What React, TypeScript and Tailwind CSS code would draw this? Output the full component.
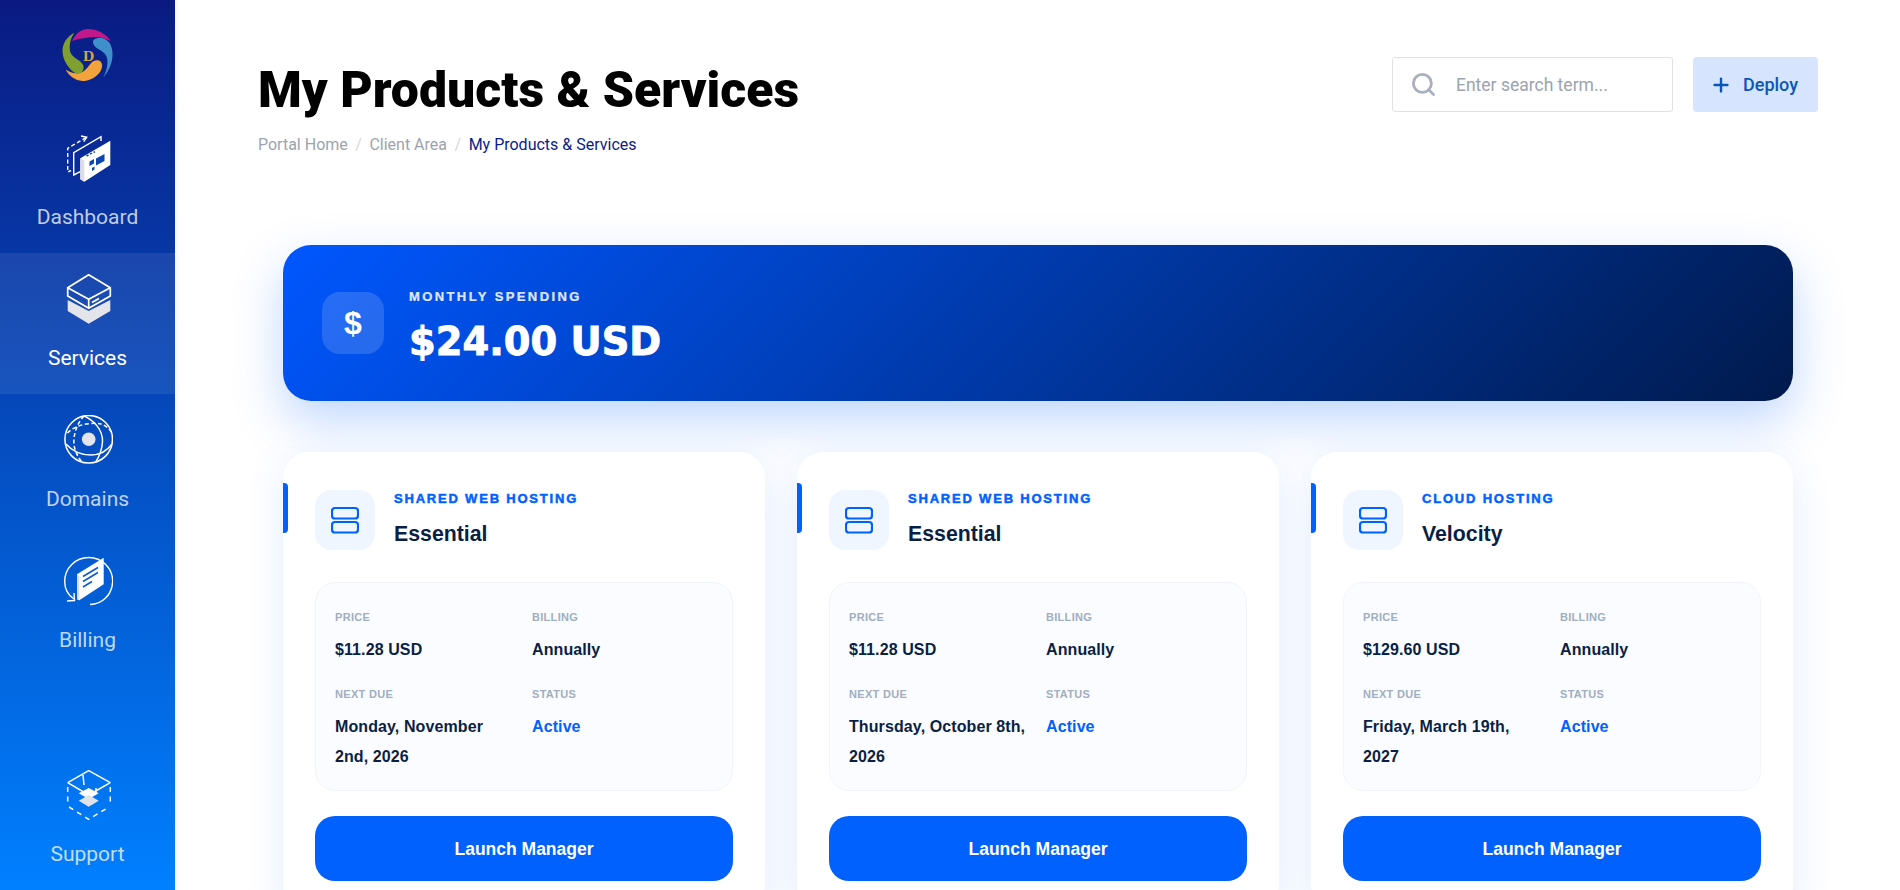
import { Search, Plus } from "lucide-react";

const roboto = "font-['Roboto',sans-serif]";
const arial = "font-['Liberation_Sans',Arial,sans-serif]";

function Logo() {
  return (
    <svg width="52" height="52" viewBox="0 0 50 50">
      <path d="M9.700 11.700C13 4 19 0 25 0C33 0 42 4 47 11.700C41 8.500 34 7 27 8C20 9 14 9.500 9.700 11.700Z" fill="#c2188b" />
      <path d="M30 11C34 7 41 8 45.500 13C50.500 20 50 35 39.700 46.700C44 38 45 30 42 25C39 20 33 19 31 16C30 14 29.500 12.500 30 11Z" fill="#3f8fca" />
      <path d="M3.500 39C9 43 15 43.500 20 41C25 38.500 27 32 31 30.500C35 29 39 31 38.500 36C38 42 31 48.500 22 50C14 50.500 7 46 3.500 39Z" fill="#f3a33c" />
      <path d="M12 3.500C5 7 0 14 0.500 22C1 30 6 38 13 42.500C18 44 22 40 20.500 35C19 30 10 28 8 22C6.500 16 8 9 12 3.500Z" fill="#7f9f2f" />
      <text x="25.500" y="30.500" textAnchor="middle" fontSize="15" fontWeight="700" fontFamily="'Liberation Serif',serif" fill="#d9a63c">D</text>
    </svg>
  );
}

function DashboardIcon() {
  return (
    <svg width="50" height="50" viewBox="0 0 50 50" fill="none" stroke="#fff" strokeWidth="1.400">
      <path d="M23 4.500L4.700 15.300V39L8 37.500" strokeDasharray="4 2.500" />
      <path d="M18 3L23.700 4.300L20.700 8.700" />
      <path d="M38 8V3.700L10.700 19.700V42L17.300 38.700" />
      <path d="M17.300 25.300L47.300 7.700V32L21.300 48.700L17.300 46.300Z" fill="#fff" stroke="none" />
      <path d="M17.300 25.300L21.300 27.700V48.700L17.300 46.300Z" fill="#dcdde3" stroke="none" />
      <path d="M23.500 23L25.500 22M27 21.200L29 20.200M30.500 19.400L32 18.700" stroke="#0b47b0" strokeWidth="1.500" />
      <path d="M26.500 28.500L31 26V30.500L26.500 33ZM33 25.500L41.500 21V28L33 32.500ZM29 35L31.500 33.500V36.500L29 38Z" fill="#0b47b0" stroke="none" />
    </svg>
  );
}

function ServicesIcon() {
  return (
    <svg width="50" height="50" viewBox="0 0 50 50" fill="none" stroke="#fff" strokeWidth="1.700" strokeLinejoin="round">
      <path d="M4.700 26L25.700 37L47.300 26V37L25.700 49.700L4.700 37Z" fill="#e4e5ea" stroke="none" />
      <path d="M4.700 13.700L25.700 0.800L47.300 13.700L25.700 25.300ZM4.700 13.700V22L25.700 34.300L47.300 22V13.700M25.700 25.300V34.300" />
      <path d="M29 28.500L36 24.500" strokeWidth="1.700" />
    </svg>
  );
}

function DomainsIcon() {
  return (
    <svg width="50" height="50" viewBox="0 0 50 50" fill="none" stroke="#fff" strokeWidth="1.500">
      <circle cx="25.700" cy="24.300" r="23.800" />
      <path d="M21 1C30 5 40 14 39.500 27C39 34 36 42 32.500 47.500" />
      <path d="M3 29C10 37 20 40 28 40C36 40 44 36 49 29" />
      <path d="M4.500 18C13 9 30 7 38 9C42 10 46 13 49 18" strokeDasharray="4 2.500" />
      <path d="M21 1C14 8 10 20 11 30C12 36 15 43 20 48" strokeDasharray="4 2.500" />
      <circle cx="25.700" cy="24.300" r="6.800" fill="#e4e5ea" stroke="none" />
    </svg>
  );
}

function BillingIcon() {
  return (
    <svg width="50" height="50" viewBox="0 0 50 50" fill="none" stroke="#fff" strokeWidth="1.400">
      <path d="M11 43C5 39 1.700 32 1.700 25.500C1.700 12 12.500 1.500 25.700 1.500C39 1.500 49.700 12 49.700 25.500C49 39 39 48.500 27 48.500" />
      <path d="M4 45L11.500 44.500L11 37" />
      <path d="M14 18.300L40.700 1.700V28.300L16.300 44.300L14 43.300Z" fill="#fff" stroke="none" />
      <path d="M14 18.300L16.300 20V44.300L14 43.300Z" fill="#dcdde3" stroke="none" />
      <path d="M20 20.500L35 11.500M20 25.500L35 16.500M20 31L29 25.500" stroke="#0b5ad0" strokeWidth="1.600" />
    </svg>
  );
}

function SupportIcon() {
  return (
    <svg width="50" height="50" viewBox="0 0 50 50" fill="none" stroke="#fff" strokeWidth="1.500" strokeLinejoin="round">
      <path d="M4.700 12.700L25.700 0.700L47.300 12.700" />
      <path d="M4.700 12.700L25.700 25L47.300 12.700M20 5L21 15M33 18V23" />
      <path d="M4.700 17V35M47.300 17V35M6 37L25.700 49.300L46 37" strokeDasharray="5 4.500" />
      <path d="M15.700 23.300L25.700 18L35.700 23.300L25.700 29Z" fill="#fff" stroke="none" />
      <path d="M15.700 30.700L25.700 25L35.700 30.700L25.700 36.700Z" fill="#e1e2e8" stroke="none" />
    </svg>
  );
}

function NavItem({ label, icon, active }: { label: string; icon: React.ReactNode; active?: boolean }) {
  return (
    <a className={`flex h-[141px] flex-col items-center pt-[21px] ${active ? "bg-white/8 text-white" : "text-white/75"}`}>
      <div className="h-[50px] w-[50px]">{icon}</div>
      <span className={`mt-[22px] text-[21px] leading-6 ${roboto}`}>{label}</span>
    </a>
  );
}

type Service = { group: string; name: string; price: string; due: string };

const services: Service[] = [
  { group: "SHARED WEB HOSTING", name: "Essential", price: "$11.28 USD", due: "Monday, November 2nd, 2026" },
  { group: "SHARED WEB HOSTING", name: "Essential", price: "$11.28 USD", due: "Thursday, October 8th, 2026" },
  { group: "CLOUD HOSTING", name: "Velocity", price: "$129.60 USD", due: "Friday, March 19th, 2027" },
];

function Field({ label, children }: { label: string; children: React.ReactNode }) {
  return (
    <div>
      <div className="mb-[6px] text-[11px] leading-6 font-bold tracking-[0.300px] text-[#a0aec0]">{label}</div>
      <div className="text-[16px] leading-[30px] font-bold tracking-[0.100px] text-[#0a1f44]">{children}</div>
    </div>
  );
}

function ServiceCard({ s }: { s: Service }) {
  return (
    <div className={`relative rounded-[26px] bg-white px-[32px] pt-[38px] pb-[30px] shadow-[0_10px_40px_rgba(0,97,255,0.12)] ${arial}`}>
      <div className="absolute top-[31px] left-0 h-[50px] w-[5px] rounded-r-[4px] bg-[#0061ff]" />
      <div className="flex items-center gap-[19px]">
        <div className="flex h-[60px] w-[60px] items-center justify-center rounded-[16px] bg-[#f0f6ff]">
          <svg width="28" height="28" viewBox="0 0 28 28" fill="none" stroke="#0061ff" strokeWidth="2.200">
            <rect x="1" y="2" width="26" height="10.500" rx="3" />
            <rect x="1" y="16" width="26" height="10.500" rx="3" />
          </svg>
        </div>
        <div className="-mt-[1px]">
          <div className="text-[13px] leading-5 font-bold tracking-[1.800px] text-[#0061ff] [-webkit-text-stroke:0.5px_#0061ff]">{s.group}</div>
          <div className="mt-[9px] text-[21.300px] leading-8 font-bold text-[#0a1f44]">{s.name}</div>
        </div>
      </div>
      <div className="mt-[32px] grid h-[209px] grid-cols-2 content-start gap-x-[16px] gap-y-[17px] rounded-[20px] border border-[#f1f4f9] bg-[#fbfcff] px-[19px] pt-[22px]">
        <Field label="PRICE">{s.price}</Field>
        <Field label="BILLING">Annually</Field>
        <Field label="NEXT DUE">{s.due}</Field>
        <Field label="STATUS"><span className="text-[#0061ff]">Active</span></Field>
      </div>
      <button className="mt-[25px] h-[65px] w-full rounded-[20px] bg-[#0061ff] pt-[1px] text-[17.500px] font-bold text-white">
        Launch Manager
      </button>
    </div>
  );
}

export default function App() {
  return (
    <div className="flex h-screen overflow-hidden bg-white">
      <aside className="flex h-full w-[175px] shrink-0 flex-col bg-[linear-gradient(180deg,#0a1a82,#0080ff)] shadow-[2px_0_4px_rgba(0,0,0,0.04)]">
        <div className="flex h-[112px] justify-center pt-[29px]"><Logo /></div>
        <NavItem label="Dashboard" icon={<DashboardIcon />} />
        <NavItem label="Services" icon={<ServicesIcon />} active />
        <NavItem label="Domains" icon={<DomainsIcon />} />
        <NavItem label="Billing" icon={<BillingIcon />} />
        <div className="mt-auto"><NavItem label="Support" icon={<SupportIcon />} /></div>
      </aside>
      <main className="min-w-0 flex-1 pt-[57px] pr-[82px] pl-[83px]">
        <header className="flex items-start justify-between">
          <div className={roboto}>
            <h1 className="mt-[5px] text-[50px] leading-[56px] font-black text-black">My Products &amp; Services</h1>
            <div className="mt-[15px] flex text-[16px] leading-6 text-[#9ca3af]">
              <span>Portal Home</span>
              <span className="px-[7.500px] text-[#d5d8de]">/</span>
              <span>Client Area</span>
              <span className="px-[7.500px] text-[#d5d8de]">/</span>
              <span className="text-[#0a1c8a]">My Products &amp; Services</span>
            </div>
          </div>
          <div className={`flex gap-[20px] ${roboto}`}>
            <div className="flex h-[55px] w-[281px] items-center rounded-[3px] border border-[#e0e1e5] bg-white pl-[17px]">
              <Search size={27} strokeWidth={2.500} className="text-[#a9afbd]" />
              <input className="ml-[19px] w-[190px] bg-transparent pt-[1px] text-[17.500px] outline-none placeholder:text-[#9ca3af]" placeholder="Enter search term..." />
            </div>
            <button className="flex h-[55px] w-[125px] items-center rounded-[4px] bg-[#d6e4fd] pl-[17px] text-[18px] font-medium text-[#0a56b8]">
              <Plus size={22} strokeWidth={2.600} />
              <span className="ml-[11px]">Deploy</span>
            </button>
          </div>
        </header>
        <section className="mx-[25px] mt-[88px]">
          <div className={`flex h-[156px] items-center gap-[25px] rounded-[28px] bg-[linear-gradient(135deg,#0057ff,#001a4d)] px-[39px] shadow-[0_20px_50px_rgba(0,97,255,0.25)] ${arial}`}>
            <div className="flex h-[62px] w-[62px] items-center justify-center rounded-[18px] bg-white/15 text-[32px] font-bold text-white">$</div>
            <div className="pt-[8px]">
              <div className="text-[13px] leading-5 font-bold tracking-[2.400px] text-white/85 [-webkit-text-stroke:0.2px_#fff]">MONTHLY SPENDING</div>
              <div className="mt-[10px] font-['DejaVu_Sans',sans-serif] text-[38.400px] leading-[50px] font-bold text-white [-webkit-text-stroke:0.9px_#fff]">$24.00 USD</div>
            </div>
          </div>
          <div className="mt-[51px] grid grid-cols-3 gap-[32px]">
            {services.map((s, i) => (
              <ServiceCard key={i} s={s} />
            ))}
          </div>
        </section>
      </main>
    </div>
  );
}
